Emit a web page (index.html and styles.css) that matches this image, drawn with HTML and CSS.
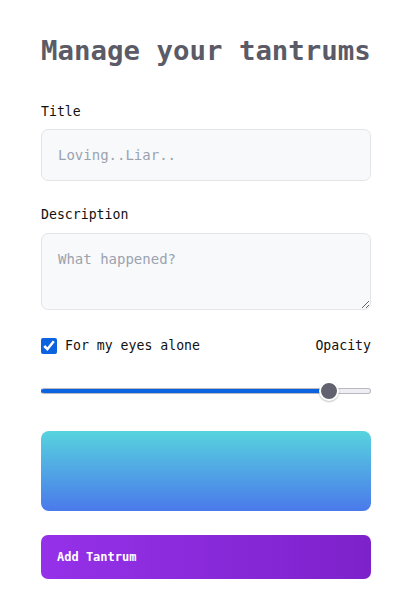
FILE: index.html
```html
<!DOCTYPE html>
<html>
<head>
<meta charset="utf-8">
<link rel="stylesheet" href="styles.css">
</head>
<body>
<main class="page">
  <h1 class="heading">Manage your tantrums</h1>
  <form class="form">
    <div class="field">
      <label class="label" for="title">Title</label>
      <input class="input" id="title" type="text" placeholder="Loving..Liar..">
    </div>
    <div class="field">
      <label class="label" for="desc">Description</label>
      <textarea class="input textarea" id="desc" placeholder="What happened?"></textarea>
    </div>
    <div class="row">
      <label class="check">
        <input class="checkbox" type="checkbox" checked>
        <span>For my eyes alone</span>
      </label>
      <span class="label-plain">Opacity</span>
    </div>
    <input class="range" type="range" min="0" max="100" value="90">
    <div class="preview"></div>
    <button class="button" type="button">Add Tantrum</button>
  </form>
</main>
</body>
</html>
```

FILE: styles.css
```css
* { box-sizing: border-box; }
html, body { margin: 0; padding: 0; background: #ffffff; }
body { font-family: "DejaVu Sans Mono", "Liberation Mono", monospace; color: #111; }

.page {
  width: 330px;
  margin-left: 41px;
  padding-top: 33px;
}

.heading {
  margin: 0;
  font-size: 27.4px;
  line-height: 36px;
  font-weight: bold;
  color: #5b5b67;
  white-space: nowrap;
}

.form {
  display: flex;
  flex-direction: column;
  margin-top: 35px;
}

.field { display: flex; flex-direction: column; margin-bottom: 26px; }
.field + .field { margin-bottom: 22px; }

.label, .label-plain, .check span {
  font-size: 13.2px;
  line-height: 16px;
  color: #111;
}
.label { margin-bottom: 9px; }
.field + .field .label { margin-bottom: 10px; }

.input {
  width: 330px;
  height: 52px;
  border: 1px solid #e3e5e8;
  border-radius: 7px;
  background: #f8f9fb;
  padding: 0 16px;
  font-family: "DejaVu Sans Mono", "Liberation Mono", monospace;
  font-size: 14px;
  color: #333;
  outline: none;
}
.input::placeholder { color: #9ba3af; }

.textarea {
  height: 77px;
  padding: 15px 16px;
  resize: vertical;
  line-height: 20px;
}

.row {
  display: flex;
  justify-content: space-between;
  align-items: center;
  margin-top: 6px;
  height: 16px;
}
.check { display: flex; align-items: center; gap: 8px; }
.checkbox {
  margin: 0;
  width: 16px;
  height: 16px;
  accent-color: #0b63e0;
}

.range {
  -webkit-appearance: none;
  appearance: none;
  width: 330px;
  height: 6px;
  margin: 34px 0 0;
  border-radius: 3px;
  background: linear-gradient(to right, #0b63e0 0 88%, #efeff3 88% 100%);
  border: 1px solid #b9b9c2;
  border-left-color: #0b63e0;
}
.range::-webkit-slider-thumb {
  -webkit-appearance: none;
  width: 20px;
  height: 20px;
  border-radius: 50%;
  background: #62616f;
  border: 2px solid #fff;
  box-shadow: 0 1px 2px rgba(0,0,0,0.25);
}

.preview {
  margin-top: 37px;
  height: 80px;
  border-radius: 8px;
  background: linear-gradient(to bottom, #57d3de, #4a79eb);
}

.button {
  margin-top: 24px;
  height: 44px;
  border: none;
  border-radius: 7px;
  background: linear-gradient(to right, #9531e9, #7d22cb);
  color: #fff;
  text-align: left;
  padding: 0 16px;
  font-family: "DejaVu Sans Mono", "Liberation Mono", monospace;
  font-size: 12px;
  font-weight: bold;
}
```
